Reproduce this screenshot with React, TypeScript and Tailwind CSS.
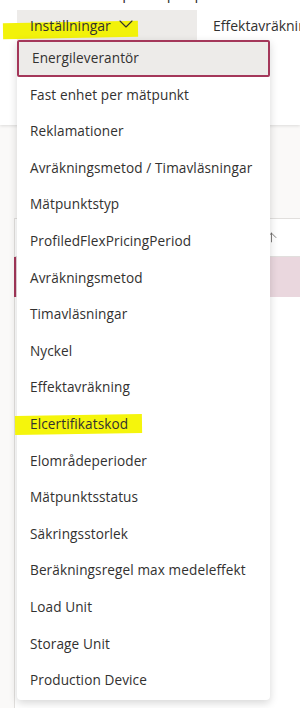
import { ChevronDown, ArrowUp } from 'lucide-react';

const ITEMS = [
  'Energileverantör',
  'Fast enhet per mätpunkt',
  'Reklamationer',
  'Avräkningsmetod / Timavläsningar',
  'Mätpunktstyp',
  'ProfiledFlexPricingPeriod',
  'Avräkningsmetod',
  'Timavläsningar',
  'Nyckel',
  'Effektavräkning',
  'Elcertifikatskod',
  'Elområdeperioder',
  'Mätpunktsstatus',
  'Säkringsstorlek',
  'Beräkningsregel max medeleffekt',
  'Load Unit',
  'Storage Unit',
  'Production Device',
];

export default function App() {
  return (
    <div className="relative w-[300px] h-[708px] overflow-hidden bg-[#faf9f8] text-[#323130] font-['Open_Sans','Noto_Sans',sans-serif]">
      {/* header card */}
      <div className="h-[125px] bg-white shadow-[0_1px_3px_rgba(0,0,0,0.12)] overflow-hidden">
        <div className="-mt-[16px] pl-[95px] text-[15px] leading-[18px] whitespace-nowrap">
          Mätpunkt per period · Inställningar
        </div>
        <div className="flex items-center mt-[8px] h-[30px]">
          <div className="shrink-0 ml-[17px] w-[180px] h-full bg-[#edebe9] flex items-center pl-[13px] gap-[3px] relative">
            <span className="absolute left-[-14px] top-[12px] w-[135px] h-[16px] bg-[#f2f20a] -rotate-1" />
            <span className="relative text-[14px]">Inställningar</span>
            <ChevronDown size={24} strokeWidth={1.1} className="relative -mt-[2px]" />
          </div>
          <span className="ml-[16px] text-[14px] whitespace-nowrap">Effektavräkning</span>
        </div>
      </div>

      {/* table behind */}
      <div className="mt-[93px] ml-[14px] border-l border-[#e1dfdd] h-full">
        <div className="h-[39px] border-t border-b border-[#e1dfdd] bg-white flex items-center justify-end pr-[21px]">
          <ArrowUp size={15} strokeWidth={1.3} className="text-[#605e5c]" />
        </div>
        <div className="h-[40px] bg-[#ead7de] border-l-2 border-[#a4375a] -ml-[1px]" />
        <div className="h-full bg-white" />
      </div>

      {/* dropdown menu */}
      <div className="absolute left-[17px] top-[40px] w-[253px] bg-white rounded-b-[4px] shadow-[0_3px_8px_rgba(0,0,0,0.16)] pb-[1px]">
        {ITEMS.map((item, i) => (
          <div
            key={item}
            className={`relative h-[36.6px] flex items-center px-[13px] text-[13.6px] tracking-[0.1px] whitespace-nowrap ${
              i === 0 ? 'bg-[#edebe9] border-2 border-[#a4375a] rounded-[2px] px-[11px]' : ''
            }`}
          >
            {item === 'Elcertifikatskod' && (
              <span className="absolute left-[-2px] top-[9px] w-[127px] h-[19px] bg-[#f5f50c] rotate-[-0.8deg]" />
            )}
            <span className="relative">{item}</span>
          </div>
        ))}
      </div>
    </div>
  );
}
